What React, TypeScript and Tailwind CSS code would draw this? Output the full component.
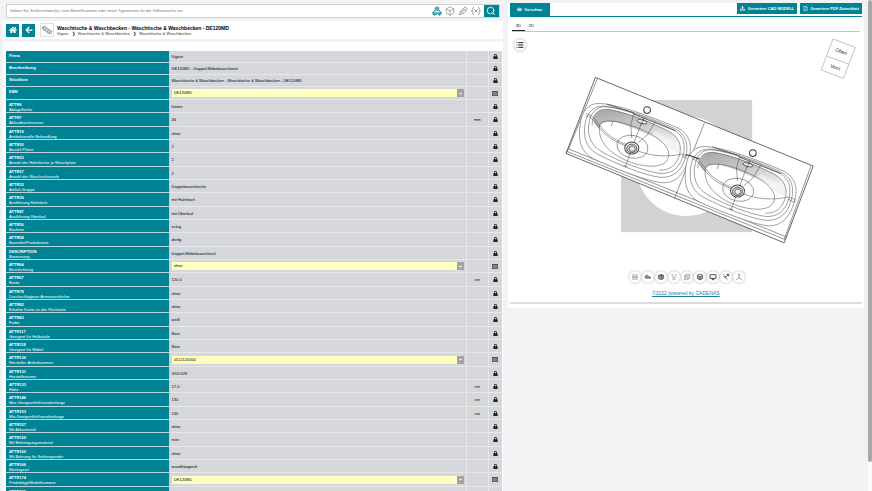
import React from 'react';
import { Box, Search, List } from 'lucide-react';
import { FaHome, FaArrowLeft, FaLock, FaEye, FaRegFilePdf, FaCaretDown } from 'react-icons/fa';

interface Attribute {
  name: string;
  label?: string;
  value: string;
  unit?: string;
  editable?: boolean;
}

const attributes: Attribute[] = [
  { name: 'Firma', value: 'Vigour' },
  { name: 'Beschreibung', value: 'DE120MD - Doppel-Möbelwaschtisch' },
  { name: 'Stückliste', value: 'Waschtische & Waschbecken - Waschtische & Waschbecken - DE120MD' },
  { name: 'KBN', value: 'DE120MD', editable: true },
  { name: 'ATTR6', label: 'Ablagefläche', value: 'hinten' },
  { name: 'ATTR7', label: 'Ablaufdurchmesser', value: '46', unit: 'mm' },
  { name: 'ATTR19', label: 'Antibakterielle Behandlung', value: 'ohne' },
  { name: 'ATTR20', label: 'Anzahl Plätze', value: '2' },
  { name: 'ATTR23', label: 'Anzahl der Hahnlöcher je Waschplatz', value: '2' },
  { name: 'ATTR27', label: 'Anzahl der Waschschüsseln', value: '2' },
  { name: 'ATTR33', label: 'Artikel-Gruppe', value: 'Doppelwaschtische' },
  { name: 'ATTR39', label: 'Ausführung Hahnloch', value: 'mit Hahnloch' },
  { name: 'ATTR47', label: 'Ausführung Überlauf', value: 'mit Überlauf' },
  { name: 'ATTR56', label: 'Bauform', value: 'eckig' },
  { name: 'ATTR58', label: 'Baureihe/Produktserie', value: 'derby' },
  { name: 'DESCRIPTION', label: 'Benennung', value: 'Doppel-Möbelwaschtisch' },
  { name: 'ATTR64', label: 'Beschichtung', value: 'ohne', editable: true },
  { name: 'ATTR67', label: 'Breite', value: '120.0', unit: 'cm' },
  { name: 'ATTR78', label: 'Durchschlagbare Armaturenlöcher', value: 'ohne' },
  { name: 'ATTR82', label: 'Erhöhte Kante an der Rückseite', value: 'ohne' },
  { name: 'ATTR83', label: 'Farbe', value: 'weiß' },
  { name: 'ATTR117', label: 'Geeignet für Halbsäule', value: 'Nein' },
  { name: 'ATTR118', label: 'Geeignet für Möbel', value: 'Nein' },
  { name: 'ATTR130', label: 'Hersteller-Artikelnummer', value: '0512120000', editable: true },
  { name: 'ATTR131', label: 'Herstellername', value: 'VIGOUR' },
  { name: 'ATTR133', label: 'Höhe', value: '17.0', unit: 'cm' },
  { name: 'ATTR146', label: 'Max.GeeignetfürKonsolenlänge', value: '130', unit: 'cm' },
  { name: 'ATTR153', label: 'Min.GeeignetfürKonsolenlänge', value: '130', unit: 'cm' },
  { name: 'ATTR157', label: 'Mit Ablaufventil', value: 'ohne' },
  { name: 'ATTR159', label: 'Mit Befestigungsmaterial', value: 'nein' },
  { name: 'ATTR160', label: 'Mit Bohrung für Seifenspender', value: 'ohne' },
  { name: 'ATTR166', label: 'Montageart', value: 'wandhängend' },
  { name: 'ATTR174', label: 'Produkttyp/Modellnummer', value: 'DE120MD', editable: true },
  { name: 'ATTR195', label: 'Serie', value: 'derby' },
];

const SearchBar = () => (
  <div className="mx-1.5 mt-1 flex h-3.5 items-stretch border border-[#cfd1d4] bg-white">
    <input
      type="text"
      aria-label="Volltextsuche"
      placeholder="Geben Sie Schlüsselwort(e), eine Bestellnummer oder einen Typenname für die Volltextsuche ein"
      className="min-w-0 flex-1 px-[3px] text-[4px] outline-none placeholder:text-[#777]"
    />
    <div className="flex items-center gap-[3px] pr-[3px] text-[#777]">
      <button aria-label="Klassifikation" className="text-[#008394]">
        <svg width="10" height="10" viewBox="0 0 24 24" fill="none" stroke="currentColor" strokeWidth="2">
          <path d="M8 4L12 2L16 4V9L12 11L8 9ZM8 4L12 6L16 4M12 6V11" />
          <path d="M8 9L2 16V20L6 22L10 20V16L6 14L2 16L6 18L10 16M6 18V22M16 9L22 16V20L18 22L14 20V16L18 14L22 16L18 18L14 16M18 18V22M10 18H14" />
        </svg>
      </button>
      <button aria-label="Geometrie"><Box size={10} strokeWidth={1.5} /></button>
      <button aria-label="Skizze">
        <svg width="10" height="10" viewBox="0 0 24 24" fill="none" stroke="currentColor" strokeWidth="1.7" strokeLinejoin="round">
          <path d="M3 21L6 12L15 4C17 2 22 3 21 8C21 10 19 12 12 18ZM6 12L12 18M13 6L19 12M9 14L16 8" />
        </svg>
      </button>
      <button aria-label="Variablen">
        <svg width="10" height="10" viewBox="0 0 24 24" fill="none" stroke="currentColor" strokeWidth="1.7">
          <path d="M7 3C3 3 5 8 4 10C3.5 11.500 2 12 1 12C2 12 3.500 12.500 4 14C5 16 3 21 7 21M17 3C21 3 19 8 20 10C20.500 11.500 22 12 23 12C22 12 20.500 12.500 20 14C19 16 21 21 17 21M8.500 8.500L15.500 15.500M15.500 8.500L8.500 15.500" />
        </svg>
      </button>
    </div>
    <button aria-label="Suchen" className="flex w-[15px] items-center justify-center bg-[#008394] text-white">
      <Search size={10} strokeWidth={2} />
    </button>
  </div>
);

const TitleBar = () => (
  <header className="mx-[3px] mt-[3px] flex h-[18px] items-center gap-[3px] bg-white px-[3px]">
    <button aria-label="Startseite" className="flex size-[13px] items-center justify-center bg-[#008394] text-white">
      <FaHome size={8} />
    </button>
    <button aria-label="Zurück" className="flex size-[13px] items-center justify-center bg-[#008394] text-white">
      <FaArrowLeft size={8} />
    </button>
    <div className="ml-0.5 flex size-3.5 items-center justify-center border border-[#e0e0e0]">
      <svg width="12" height="12" viewBox="0 0 24 24" fill="#eee" stroke="#555" strokeWidth="1">
        <path d="M3 6L7 4L22 15L19 20L15 19L2 9Z" />
        <ellipse cx="7.500" cy="9" rx="3.500" ry="2" transform="rotate(35 7.500 9)" />
        <ellipse cx="15.500" cy="14.500" rx="3.500" ry="2" transform="rotate(35 15.500 14.500)" />
      </svg>
    </div>
    <div>
      <h1 className="text-[5px] leading-[6px] font-bold text-black">
        Waschtische &amp; Waschbecken - Waschtische &amp; Waschbecken - DE120MD
      </h1>
      <nav className="flex gap-[3px] text-[4px] leading-[5px] text-[#333]">
        <a href="#vigour">Vigour</a>
        <span className="font-bold">❯</span>
        <a href="#gruppe">Waschtische &amp; Waschbecken</a>
        <span className="font-bold">❯</span>
        <a href="#reihe">Waschtische &amp; Waschbecken</a>
      </nav>
    </div>
  </header>
);

const ValueListIcon = () => (
  <svg width="6" height="5" viewBox="0 0 12 10" className="mx-auto">
    <rect width="12" height="10" fill="#555" />
    <path d="M1 3.500H11M1 5.500H11M1 7.500H11M4 2V9M8 2V9" stroke="#b5b6b9" strokeWidth="0.800" />
  </svg>
);

const AttributeRow = ({ name, label, value, unit, editable }: Attribute) => (
  <tr className="h-[13px] nth-[-n+3]:h-3 nth-[3n+6]:h-[14px]">
    <th scope="row" className="border-r border-b border-[#b5d5da] bg-[#008394] px-[3px] pt-0.5 text-left align-top text-[4px] leading-[5px] font-normal text-white">
      <div className="font-bold">{name}</div>
      {label && <div>{label}</div>}
    </th>
    <td className="border-r border-b border-[#e6e7ea] px-0.5">
      {editable ? (
        <div className="flex h-2 items-stretch">
          <select
            aria-label={label || name}
            defaultValue={value}
            className="min-w-0 flex-1 appearance-none bg-[#ffffc0] px-0.5 text-[4px] leading-[8px] text-black"
          >
            <option>{value}</option>
          </select>
          <span className="pointer-events-none flex w-[7px] items-center justify-center bg-[#a3a3a5] text-white">
            <FaCaretDown size={5} />
          </span>
        </div>
      ) : (
        value
      )}
    </td>
    <td className="border-r border-b border-[#e6e7ea] text-center">{unit}</td>
    <td className="border-b border-[#e6e7ea] text-[#222]">
      {editable ? <ValueListIcon /> : <FaLock size={5} className="mx-auto" />}
    </td>
  </tr>
);

const AttributeTable = () => (
  <div className="mx-[3px] mt-[3px] bg-white pt-[9px] pl-[3px] pr-px">
    <table className="w-full table-fixed border-separate border-spacing-0 bg-[#d6d7db] text-[4px] leading-[5px] text-black">
      <colgroup>
        <col className="w-[33%]" />
        <col />
        <col className="w-[22px]" />
        <col className="w-[13px]" />
      </colgroup>
      <tbody>
        {attributes.map((attribute) => (
          <AttributeRow key={attribute.name} {...attribute} />
        ))}
      </tbody>
    </table>
  </div>
);

// One bowl with its rings, shading, drain, overflow and tap hole
const Basin = () => (
  <g fill="none" stroke="#444" strokeWidth="1.500">
    <path d="M60 165C64 120 88 98 122 100C190 106 290 148 345 170C388 188 398 225 386 264C374 308 350 339 308 338C268 336 150 290 100 266C62 246 54 210 60 165Z" fill="#fff" />
    <path d="M74 168C78 130 98 108 130 108C195 112 290 152 340 174C380 192 386 226 376 262C366 300 342 322 304 322C262 320 160 278 112 252C80 234 70 206 74 168Z" />
    <path d="M86 165C90 128 108 110 136 110C200 116 290 156 334 176C372 194 378 226 368 260C358 292 336 312 300 310C260 306 170 272 124 244C94 226 82 200 86 165Z" />
    <path d="M100 150C104 126 122 114 150 118C210 128 290 164 328 184C358 202 364 222 358 248C330 246 318 215 270 196C220 174 170 150 140 155C122 158 120 166 118 176C108 170 102 160 100 150Z" fill="url(#bowlShade)" stroke="none" />
    <path d="M285 180L336 212L322 228L300 214L285 230L265 206Z" fill="#fff" fillOpacity="0.400" stroke="none" />
    <path d="M96 165C97 130 116 116 142 118C204 126 288 164 326 184C358 202 366 228 358 256C348 284 330 302 298 300" />
    <path d="M119 166C124 146 168 152 206 164C262 182 330 218 326 256C322 292 276 292 238 284C172 270 108 222 119 166Z" />
    <ellipse cx="217" cy="230" rx="47" ry="34" transform="rotate(12 217 230)" />
    <path d="M77 131C98 134 104 148 122 170C146 202 176 214 200 224M77 138C96 140 102 154 120 176C144 206 174 218 200 228" />
    <path d="M233 242C270 258 320 262 366 252L388 259L386 268L366 258" />
    <path d="M222 128L212 164L215 204M250 142L195 292M285 156L262 194L234 218M159 152L154 168" />
    <path d="M190 286L202 290" />
    <path d="M140 102L220 128M220 132L346 182" strokeWidth="2.500" />
    <ellipse cx="246" cy="155" rx="15" ry="5" transform="rotate(14 246 155)" fill="#fff" strokeWidth="2.500" />
    <path d="M253 144L242 166" strokeWidth="2" />
    <circle cx="261" cy="120" r="10" fill="#fff" strokeWidth="3" />
    <path d="M252 122C254 132 268 132 270 122" />
    <ellipse cx="215" cy="234" rx="21" ry="18" fill="#fff" strokeWidth="3" />
    <ellipse cx="215" cy="235" rx="15" ry="13" fill="#ccc" strokeWidth="2.500" />
    <ellipse cx="216" cy="236" rx="9" ry="8" fill="#eee" strokeWidth="2" />
  </g>
);

const Model = () => (
  <svg viewBox="510 32 352 239" className="block w-full" role="img" aria-label="3D Ansicht">
    <defs>
      <linearGradient id="bowlShade" x1="0" y1="0" x2="0.400" y2="1">
        <stop offset="0" stopColor="#a6a6a6" />
        <stop offset="0.500" stopColor="#c9c9c9" />
        <stop offset="1" stopColor="#f2f2f2" />
      </linearGradient>
    </defs>
    <rect x="621" y="100" width="131" height="132" fill="#d2d2d2" />
    <circle cx="686" cy="166" r="50" fill="#fff" />
    <g transform="translate(560 70) scale(0.33333)">
      <path d="M106 22L759 288L672 518L18 250Z" fill="#fff" stroke="#333" strokeWidth="2.200" />
      <path d="M112 25L25 238M753 286L672 508M24 236L678 500M21 244L674 508M24 236L18 250M433 158L343 385" fill="none" stroke="#444" strokeWidth="1.700" />
      <Basin />
      <g transform="translate(317 129)">
        <Basin />
      </g>
      <path d="M376 254C394 255 402 262 418 267" fill="none" stroke="#333" strokeWidth="3" />
    </g>
    <g fill="#fff" stroke="#888" strokeWidth="0.500">
      <path d="M832.700 39L855 47.300L843.300 78.300L821 70Z" />
      <path d="M827 56.300L849 64.300" />
    </g>
    <g fontSize="5" fill="#222" textAnchor="middle">
      <text transform="translate(840.500 53) rotate(20)">Oben</text>
      <text transform="translate(834.500 69) rotate(20)">Vorn</text>
    </g>
  </svg>
);

const viewTools = [
  { title: 'Schnitt', d: 'M5 5H19V10H5ZM5 14H19V19H5ZM3 12H21' },
  { title: 'Ansicht', d: 'M3 10L10 6V17L3 14ZM12 8L16 18L20 12M13 13H21', solid: true },
  { title: 'Schattiert', d: 'M4 8L12 4L20 7V17L12 20L4 17ZM4 8H14V18M14 9L20 7', solid: true },
  { title: 'Bemaßung', d: 'M4 5H9M15 5H20M6 5L10 13H14L18 5M9 13V20H15V13' },
  { title: 'Drahtmodell', d: 'M4 9H15V20H4ZM9 4H20V15H9ZM4 9L9 4M15 9L20 4M15 20L20 15M4 20L9 15' },
  { title: 'Würfel', d: 'M4 7L12 3L20 7V17L12 21L4 17ZM4 7L12 11L20 7M12 11V21', solid: true },
  { title: 'Vollbild', d: 'M3 5H21V16H3ZM12 16V20M8 20H16', bold: true },
  { title: 'Messen', d: 'M4 4L7 7M9 9L12 12M5 10L9 14L20 4M14 4H20V10M11 15L16 20', bold: true },
  { title: 'Achsen', d: 'M12 4V14L4 20M12 14L20 20M10 6L12 3L14 6', dark: true },
];

const PreviewPanel = () => (
  <section className="mt-[3px] bg-white px-0.5 pb-1">
    <div className="flex items-start justify-between border-b border-[#008394]">
      <button className="flex h-[13px] w-10 items-center justify-center gap-0.5 bg-[#008394] text-[4px] font-bold text-white">
        <FaEye size={5} />
        Vorschau
      </button>
      <div className="flex gap-[3px] text-[4px] font-bold text-white">
        <button className="flex h-[11px] items-center gap-[3px] bg-[#008394] px-[3px]">
          <svg width="5" height="5" viewBox="0 0 10 10" fill="currentColor">
            <path d="M4 0H6V3H8L5 6.500L2 3H4ZM1 5L0 9H10L9 5L5 8.500Z" />
          </svg>
          Generiere CAD MODELL
        </button>
        <button className="flex h-[11px] items-center gap-0.5 bg-[#008394] px-[3px]">
          <FaRegFilePdf size={5} />
          Generiere PDF-Datenblatt
        </button>
      </div>
    </div>
    <div className="mx-0.5 mt-1 flex border-b border-[#c4c4c4] text-[4px] leading-[9px]">
      <button className="w-[13px] border-b border-[#222] text-black">3D</button>
      <button className="w-[13px] border-b border-transparent text-black">2D</button>
    </div>
    <div className="relative">
      <Model />
      <button
        aria-label="Strukturbaum"
        className="absolute top-[7px] left-1 flex size-3 items-center justify-center rounded-full bg-white text-[#222] shadow-[0_0_2px_#888]"
      >
        <List size={8} strokeWidth={3} />
      </button>
    </div>
    <div className="flex justify-center gap-px pl-0.5">
      {viewTools.map(({ title, d, solid, bold, dark }) => (
        <button key={title} aria-label={title} className="flex size-3 items-center justify-center rounded-full bg-white shadow-[0_0_2px_#999]">
          <svg width="8" height="8" viewBox="0 0 24 24" fill={solid ? '#999' : 'none'} stroke={bold || solid || dark ? '#333' : '#777'} strokeWidth={bold ? 2.5 : 1.5}>
            <path d={d} />
          </svg>
        </button>
      ))}
    </div>
    <div className="mt-[7px] border-b-2 border-[#dcdcdc] pb-1.5 text-center text-[5px] leading-[6px]">
      <a href="#cadenas" className="text-[#1c7fa6] underline">©2022 powered by CADENAS</a>
    </div>
  </section>
);

export default function App() {
  return (
    <div className="flex h-screen overflow-hidden bg-[#f1f2f4] font-['Liberation_Sans',Arial,sans-serif]">
      <main className="w-[58%] shrink-0">
        <SearchBar />
        <TitleBar />
        <AttributeTable />
      </main>
      <aside className="min-w-0 flex-1 pr-1 pl-0.5">
        <PreviewPanel />
      </aside>
      <div className="w-1 bg-[#fafafa]">
        <div className="h-[94%] rounded-sm bg-[#a8a8a8]" />
      </div>
    </div>
  );
}
